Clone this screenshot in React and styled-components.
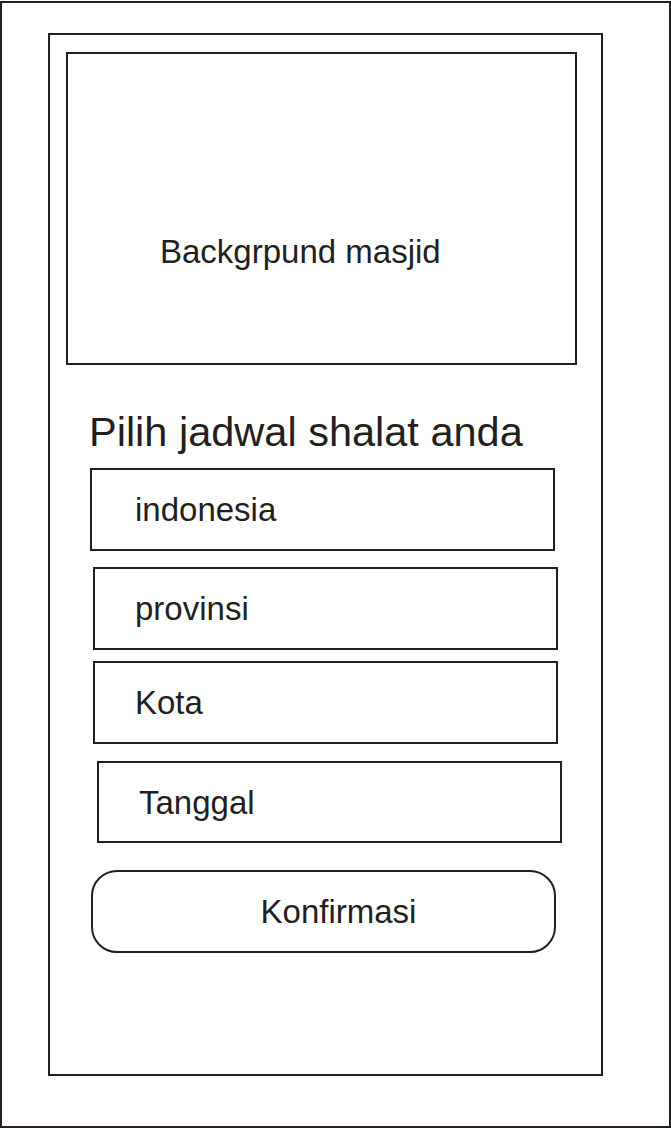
import React from "react";
import styled, { createGlobalStyle } from "styled-components";

const GlobalStyle = createGlobalStyle`
  html, body {
    margin: 0;
    padding: 0;
    background: #ffffff;
  }
  body {
    font-family: "Liberation Sans", Arial, sans-serif;
    color: #231f20;
  }
`;

const Page = styled.div`
  box-sizing: border-box;
  width: 671px;
  height: 1127px;
  margin-top: 1px;
  padding: 30px 0 0 46px;
  border: 2px solid #231f20;
`;

const Phone = styled.div`
  box-sizing: border-box;
  display: flex;
  flex-direction: column;
  align-items: flex-start;
  width: 555px;
  height: 1043px;
  border: 2px solid #231f20;
`;

const Banner = styled.div`
  box-sizing: border-box;
  width: 511px;
  height: 313px;
  margin: 17px 0 0 16px;
  padding: 181px 0 0 92px;
  border: 2px solid #231f20;
  font-size: 33px;
  line-height: 1;
`;

const Title = styled.h1`
  margin: 46px 0 0 39px;
  font-size: 41.5px;
  font-weight: normal;
  line-height: 41px;
`;

const Form = styled.div`
  display: flex;
  flex-direction: column;
  align-items: flex-start;
`;

const Field = styled.div`
  box-sizing: border-box;
  display: flex;
  align-items: center;
  width: 465px;
  height: ${(p) => p.$h || 83}px;
  margin-top: ${(p) => p.$top}px;
  margin-left: ${(p) => p.$left}px;
  padding-left: ${(p) => p.$pad || 40}px;
  border: 2px solid #231f20;
  font-size: 33px;
  line-height: 1;
`;

const Button = styled.button`
  box-sizing: border-box;
  display: flex;
  align-items: center;
  justify-content: center;
  width: 465px;
  height: 83px;
  margin: 27px 0 0 41px;
  padding: 0 0 0 30px;
  border: 2px solid #231f20;
  border-radius: 26px;
  background: #ffffff;
  color: #231f20;
  font-family: "Liberation Sans", Arial, sans-serif;
  font-size: 33px;
  line-height: 1;
`;

const fields = [
  { label: "indonesia", top: 16, left: 40, pad: 43 },
  { label: "provinsi", top: 16, left: 43, pad: 40 },
  { label: "Kota", top: 11, left: 43, pad: 40 },
  { label: "Tanggal", top: 17, left: 47, pad: 40, h: 82 },
];

export default function App() {
  return (
    <>
      <GlobalStyle />
      <Page>
        <Phone>
          <Banner>Backgrpund masjid</Banner>
          <Title>Pilih jadwal shalat anda</Title>
          <Form>
            {fields.map((f) => (
              <Field key={f.label} $top={f.top} $left={f.left} $pad={f.pad} $h={f.h}>
                {f.label}
              </Field>
            ))}
            <Button>Konfirmasi</Button>
          </Form>
        </Phone>
      </Page>
    </>
  );
}
